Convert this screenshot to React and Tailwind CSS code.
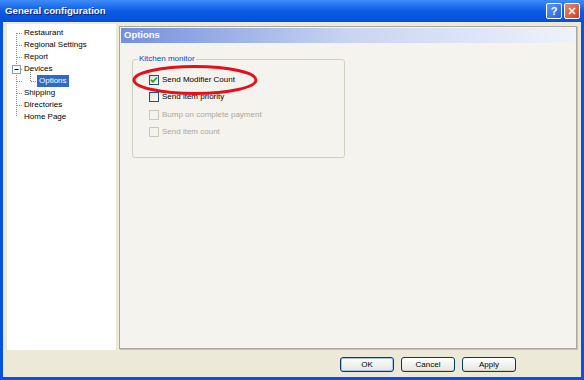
import React from 'react';

const font = { fontFamily: '"Liberation Sans", Arial, sans-serif' };

// Tree items shown in the left pane
const treeItems = [
  { label: 'Restaurant' },
  { label: 'Regional Settings' },
  { label: 'Report' },
  { label: 'Devices', expanded: true },
  { label: 'Options', child: true, selected: true },
  { label: 'Shipping' },
  { label: 'Directories' },
  { label: 'Home Page' },
];

const options = [
  { label: 'Send Modifier Count', checked: true, enabled: true },
  { label: 'Send item priority', checked: false, enabled: true },
  { label: 'Bump on complete payment', checked: false, enabled: false },
  { label: 'Send item count', checked: false, enabled: false },
];

function TreeLines() {
  // dotted connectors of the tree view
  return (
    <svg className="absolute left-0 top-0" width="60" height="100">
      <line x1="9.5" y1="9" x2="9.5" y2="93" stroke="#8C8C8C" strokeDasharray="1 1" />
      {[9, 21, 33, 57, 69, 81].map((y) => (
        <line key={y} x1="10" y1={y + 0.5} x2="16" y2={y + 0.5} stroke="#8C8C8C" strokeDasharray="1 1" />
      ))}
      <line x1="14" y1="45.5" x2="16" y2="45.5" stroke="#8C8C8C" strokeDasharray="1 1" />
      <line x1="23.5" y1="46" x2="23.5" y2="57" stroke="#8C8C8C" strokeDasharray="1 1" />
      <line x1="24" y1="57.5" x2="30" y2="57.5" stroke="#8C8C8C" strokeDasharray="1 1" />
      <rect x="5.5" y="41.5" width="8" height="8" fill="#fff" stroke="#7F9DB9" />
      <line x1="7.5" y1="45.5" x2="11.5" y2="45.5" stroke="#000" />
    </svg>
  );
}

function Checkbox({ checked, enabled }) {
  return (
    <span
      className={`flex h-[10px] w-[10px] shrink-0 items-center justify-center border ${
        enabled ? 'border-[#1C5180] bg-gradient-to-br from-[#DCDCD7] to-white' : 'border-[#CAC8BB] bg-[#F4F3EE]'
      }`}
    >
      {checked && (
        <svg width="8" height="8" viewBox="0 0 8 8">
          <path d="M1 3.8 L3 5.8 L7 1.5" fill="none" stroke="#21A121" strokeWidth="1.8" />
        </svg>
      )}
    </span>
  );
}

function XpButton({ children, primary }) {
  return (
    <button
      className={`h-[15px] w-[54px] rounded-[3px] border border-[#003C74] bg-gradient-to-b from-white to-[#E6E5DE] text-[8px] leading-none text-black ${
        primary ? 'shadow-[inset_0_0_0_1px_#A8C2EF]' : 'shadow-[inset_0_-1px_0_#D6D0C5]'
      }`}
    >
      {children}
    </button>
  );
}

export default function App() {
  return (
    <div className="flex h-[380px] w-[584px] flex-col bg-[#0852E0]" style={font}>
      {/* Title bar */}
      <div className="flex h-[22px] items-center bg-gradient-to-b from-[#3E8CF8] via-[#0A5BE6] to-[#0550DB] pl-[5px] pr-[4px]">
        <span className="flex-1 text-[9.7px] font-bold text-white [text-shadow:1px_1px_0_#0A1E6A]">
          General configuration
        </span>
        <div className="flex gap-[2px]">
          <span className="flex h-[16px] w-[16px] items-center justify-center rounded-[2px] border border-white bg-gradient-to-br from-[#5E97F6] to-[#2460DC] text-[11px] font-bold leading-none text-white">
            ?
          </span>
          <span className="flex h-[16px] w-[16px] items-center justify-center rounded-[2px] border border-white bg-gradient-to-br from-[#E9886B] to-[#C8401C]">
            <svg width="8" height="8" viewBox="0 0 8 8">
              <path d="M1 1 L7 7 M7 1 L1 7" stroke="#fff" strokeWidth="1.6" />
            </svg>
          </span>
        </div>
      </div>

      {/* Body */}
      <div className="mx-[3px] mb-[3px] flex flex-1 flex-col bg-[#ECE9D8]">
        <div className="flex h-[328px] gap-[3px] pl-[4px] pr-[4px] pt-[2px]">
          {/* Tree */}
          <div className="relative h-[326px] w-[109px] bg-white">
            <TreeLines />
            <div className="relative pt-[3px] text-[8px] text-black">
              {treeItems.map((item) => (
                <div
                  key={item.label}
                  className={`flex h-[12px] items-center ${item.child ? 'pl-[30px]' : 'pl-[17px]'}`}
                >
                  <span
                    className={`leading-[12px] ${item.selected ? 'bg-[#316AC5] px-[2px] text-white' : ''}`}
                  >
                    {item.label}
                  </span>
                </div>
              ))}
            </div>
          </div>

          {/* Options panel */}
          <div className="mt-[2px] flex h-[323px] flex-1 flex-col border border-[#A9A7A0] bg-[#F4F3EE] p-[1px] shadow-[1px_1px_0_#C6C3B6]">
            <div className="flex h-[15px] items-center bg-gradient-to-r from-[#7490DC] via-[#C9D4F1] to-[#EFF2FA] pl-[3px] text-[9.5px] font-bold text-white">
              Options
            </div>
            <div className="relative pl-[11px] pt-[11px]">
              <fieldset className="w-[213px] rounded-[3px] border border-[#D0D0BF] pb-[16px] pl-[4px] pt-[7px]">
                <legend className="ml-[1px] px-[1px] text-[8px] leading-[10px] text-[#0046D5]">Kitchen monitor</legend>
                <div className="pl-[12px]">
                  {options.map((opt) => (
                    <div key={opt.label} className="flex h-[17.5px] items-center gap-[3px]">
                      <Checkbox checked={opt.checked} enabled={opt.enabled} />
                      <span className={`text-[8px] ${opt.enabled ? 'text-black' : 'text-[#ACA899]'}`}>{opt.label}</span>
                    </div>
                  ))}
                </div>
              </fieldset>
              {/* red highlight around first option */}
              <svg className="absolute left-[11px] top-[21px]" width="130" height="34">
                <ellipse cx="63" cy="16" rx="61" ry="13.5" fill="none" stroke="#E3101B" strokeWidth="3" />
              </svg>
            </div>
          </div>
        </div>

        {/* Buttons */}
        <div className="flex justify-end gap-[7px] pr-[65px] pt-[7px]">
          <XpButton primary>OK</XpButton>
          <XpButton>Cancel</XpButton>
          <XpButton>Apply</XpButton>
        </div>
      </div>
    </div>
  );
}
